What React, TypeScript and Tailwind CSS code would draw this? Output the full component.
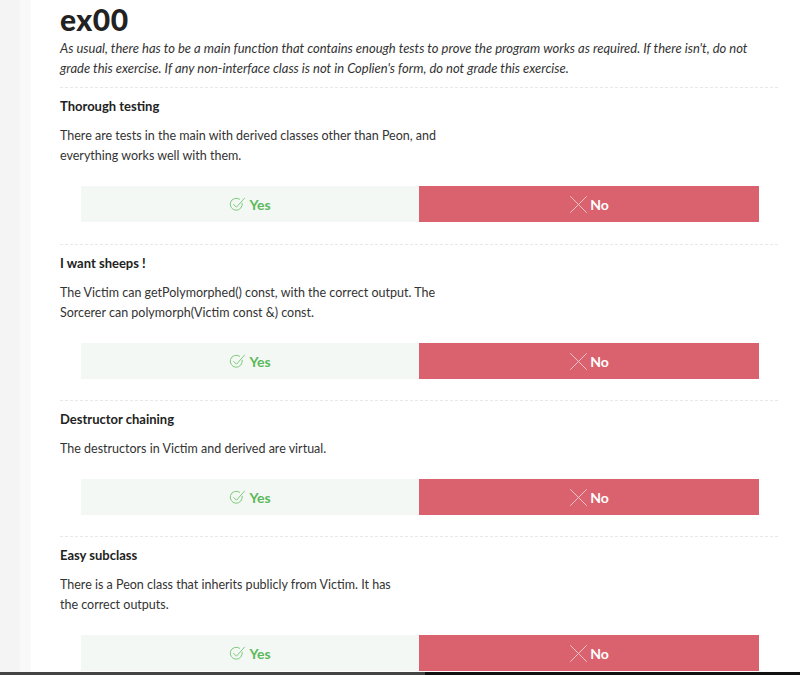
import React from "react";

const font = { fontFamily: "Lato, 'Noto Sans', sans-serif" };

function CheckIcon() {
  return (
    <svg width="17" height="17" viewBox="0 0 17 17" fill="none" stroke="#7cc97c" strokeWidth="1" strokeLinecap="round" strokeLinejoin="round">
      <path d="M13.2 7.2 A6 6 0 1 1 10.6 3.2" />
      <path d="M4.6 8.4 L7.4 11.2 L15.5 2.2" />
    </svg>
  );
}

function XIcon() {
  return (
    <svg width="19" height="19" viewBox="0 0 19 19" fill="none" stroke="#f3c3c8" strokeWidth="1" strokeLinecap="round">
      <path d="M1.5 1.5 L17.5 17.5" />
      <path d="M17.5 1.5 L1.5 17.5" />
    </svg>
  );
}

function Section({ title, lines, mb }: { title: string; lines: string[]; mb: string }) {
  return (
    <div>
      <div className="border-t border-dashed border-[#e8e8e8]" />
      <div className="pt-[8px]">
        <div className="text-[13px] leading-[20px] font-bold text-[#222]">{title}</div>
        <div className="mt-[10px] text-[12.5px] leading-[20px] text-[#333]">
          {lines.map((l, i) => (
            <div key={i}>{l}</div>
          ))}
        </div>
        <div className={`ml-[21px] mt-[20px] flex w-[678px] h-[36px] ${mb}`}>
          <div className="w-[338px] bg-[#f4f8f4] flex items-center justify-center gap-[3px]">
            <CheckIcon />
            <span className="text-[14px] font-bold text-[#5cb85c]">Yes</span>
          </div>
          <div className="w-[340px] bg-[#d9626e] flex items-center justify-center gap-[2px]">
            <XIcon />
            <span className="text-[14px] font-bold text-white">No</span>
          </div>
        </div>
      </div>
    </div>
  );
}

export default function App() {
  return (
    <div className="relative flex w-[800px] h-[675px] overflow-hidden bg-white" style={font}>
      <div className="w-[20px] bg-[#f4f4f4]" />
      <div className="w-[11px] bg-[#f9f9f9]" />
      <div className="flex-1 pl-[29px] pr-[22px]">
        <h1 className="text-[30px] leading-[38px] font-black text-[#222] tracking-[0.5px]">ex00</h1>
        <p className="italic text-[13px] leading-[20px] text-[#333]">
          As usual, there has to be a main function that contains enough tests to prove the program works as required. If there isn't, do not
          <br />
          grade this exercise. If any non-interface class is not in Coplien's form, do not grade this exercise.
        </p>
        <div className="mt-[9px]">
          <Section
            title="Thorough testing"
            lines={["There are tests in the main with derived classes other than Peon, and", "everything works well with them."]}
            mb="mb-[22px]"
          />
          <Section
            title="I want sheeps !"
            lines={["The Victim can getPolymorphed() const, with the correct output. The", "Sorcerer can polymorph(Victim const &) const."]}
            mb="mb-[21px]"
          />
          <Section title="Destructor chaining" lines={["The destructors in Victim and derived are virtual."]} mb="mb-[21px]" />
          <Section
            title="Easy subclass"
            lines={["There is a Peon class that inherits publicly from Victim. It has", "the correct outputs."]}
            mb=""
          />
        </div>
      </div>
      <div className="absolute bottom-0 left-0 right-0 h-[3px] flex">
        <div className="w-[425px] bg-[#444]" />
        <div className="flex-1 bg-[#111]" />
      </div>
    </div>
  );
}
